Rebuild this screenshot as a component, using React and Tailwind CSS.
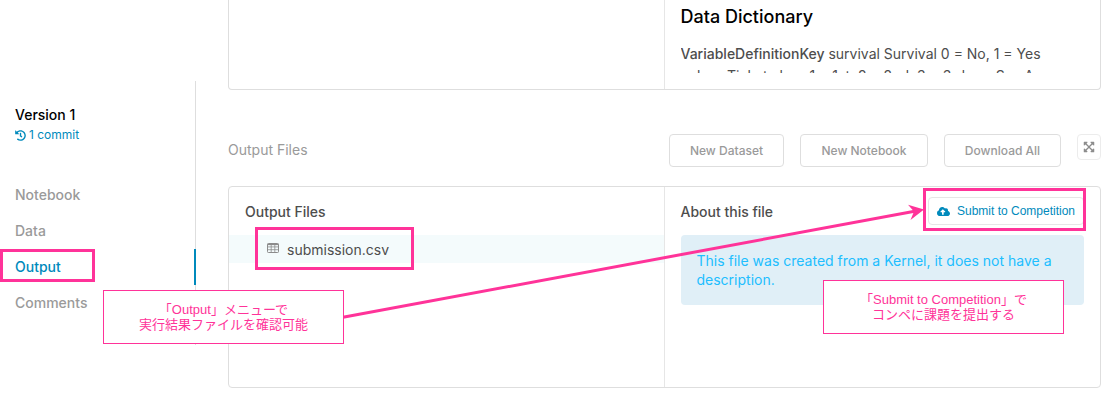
import { FaCloudUploadAlt, FaExpandArrowsAlt, FaHistory } from "react-icons/fa";

const navItems = ["Notebook", "Data", "Output", "Comments"];
const actions = [
  { label: "New Dataset", width: "w-[115px]" },
  { label: "New Notebook", width: "w-32" },
  { label: "Download All", width: "w-[117px]" },
];

function TableIcon() {
  return (
    <svg width="12" height="10" viewBox="0 0 12 10" fill="none" stroke="#8c8c8c" className="-mt-1" aria-hidden="true">
      <rect x="0.5" y="0.5" width="11" height="9" rx="0.8" />
      <path d="M0.5 1.5h11" strokeWidth="1.2" />
      <path d="M0.5 3.9h11M0.5 6.7h11M4.2 0.5v9M7.8 0.5v9" strokeWidth="0.8" />
    </svg>
  );
}

function Highlight({ className }) {
  return <span className={`pointer-events-none absolute border-3 border-[#ff3399] ${className}`} />;
}

function Sidebar() {
  return (
    <aside className="mt-[81px] h-[264px] w-[196px] shrink-0 border-r border-[#dedede] pt-6">
      <div className="pl-[15px]">
        <h2 className="text-sm leading-5 font-medium text-black">Version 1</h2>
        <a href="#commits" className="flex items-center gap-[3px] text-xs leading-5 text-[#008abc]">
          <FaHistory size={11} />
          1 commit
        </a>
      </div>
      <nav className="mt-8 flex flex-col">
        {navItems.map((item) => {
          const active = item === "Output";
          return (
            <a
              key={item}
              href={`#${item.toLowerCase()}`}
              aria-current={active ? "page" : undefined}
              className={`relative -mr-px flex h-9 items-center pl-[15px] text-sm font-medium ${
                active ? "border-r-2 border-[#008abc] text-[#008abc]" : "text-[#9a9a9a]"
              }`}
            >
              {item}
              {active && <Highlight className="top-0 left-0 h-[33px] w-[95px]" />}
            </a>
          );
        })}
      </nav>
    </aside>
  );
}

function Callout({ className, children }) {
  return (
    <div
      className={`absolute flex h-[54px] w-[241px] items-center justify-center border border-[#ff3399] bg-white text-center font-['Liberation_Sans','Noto_Sans_CJK_JP',sans-serif] text-[13px] leading-[15px] text-[#ff3399] ${className}`}
    >
      <p>{children}</p>
    </div>
  );
}

export default function App() {
  return (
    <div className="relative flex items-start overflow-hidden bg-white pb-[31px] font-['Inter',sans-serif]">
      <Sidebar />
      <main className="ml-8 mr-[13px] min-w-0 flex-1">
        <section className="grid h-[90px] grid-cols-2 rounded-b border border-t-0 border-[#dedede]">
          <div className="border-r border-[#e6e6e6]" />
          <div className="px-4 pt-[5px]">
            <h2 className="text-lg leading-6 font-medium text-black">Data Dictionary</h2>
            <p className="mt-[14px] h-[30px] overflow-hidden text-sm leading-[22px] text-[#4d4d4d]">
              <strong className="font-medium">VariableDefinitionKey</strong> survival Survival 0 = No, 1 = Yes
              <br />
              pclass Ticket class 1 = 1st, 2 = 2nd, 3 = 3rd sex Sex Age
            </p>
          </div>
        </section>

        <div className="mt-11 flex items-start">
          <h2 className="mr-auto text-sm leading-8 text-[#9a9a9a]">Output Files</h2>
          <div className="flex items-start gap-4">
            {actions.map(({ label, width }) => (
              <button
                key={label}
                type="button"
                className={`h-[33px] rounded border border-[#dedede] text-xs font-medium text-[#9a9a9a] ${width}`}
              >
                {label}
              </button>
            ))}
            <button
              type="button"
              aria-label="Expand"
              className="flex h-[26px] w-6 items-center justify-center rounded border border-[#ececec] text-[#8c8c8c]"
            >
              <FaExpandArrowsAlt size={12} />
            </button>
          </div>
        </div>

        <section className="mt-[19px] grid min-h-[202px] grid-cols-2 rounded border border-[#dedede]">
          <div className="border-r border-[#e6e6e6] pt-[15px]">
            <h3 className="px-4 text-sm leading-5 font-medium text-[#4d4d4d]">Output Files</h3>
            <a
              href="#submission"
              className="relative mt-[13px] flex h-7 items-center gap-2 bg-[#f4fbfc] pt-px pl-[38px] text-sm text-[#4d4d4d]"
            >
              <TableIcon />
              submission.csv
              <Highlight className="-top-2 left-[26px] h-[43px] w-[159px]" />
            </a>
          </div>
          <div className="px-4 pt-[10px]">
            <div className="flex items-start justify-between">
              <h3 className="text-sm leading-[30px] font-medium text-[#4d4d4d]">About this file</h3>
              <button
                type="button"
                className="relative flex h-7 w-[156px] items-center justify-center gap-[7px] rounded border border-[#e6e6e6] font-['Liberation_Sans',sans-serif] text-xs text-[#008abc]"
              >
                <FaCloudUploadAlt size={13} className="shrink-0" />
                <span className="whitespace-nowrap">Submit to Competition</span>
                <Highlight className="-top-[10px] -right-[3px] h-[43px] w-[163px]" />
              </button>
            </div>
            <p className="mt-2 min-h-[70px] rounded bg-[#e0eff7] px-4 py-4 text-sm leading-[19px] text-[#20beff]">
              This file was created from a Kernel, it does not have a description.
            </p>
          </div>
        </section>
      </main>

      <svg
        className="pointer-events-none absolute top-[200px] left-[340px]"
        width="590"
        height="122"
        viewBox="340 200 590 122"
        aria-hidden="true"
      >
        <path d="M343 317.3L916 211" stroke="#ff3399" strokeWidth="3" />
        <path d="M924 209.5L908 204.7L914 211.5L910.5 220Z" fill="#ff3399" />
      </svg>
      <Callout className="top-[290px] left-[103px]">
        「Output」メニューで
        <br />
        実行結果ファイルを確認可能
      </Callout>
      <Callout className="top-[280px] left-[823px]">
        「Submit to Competition」で
        <br />
        コンペに課題を提出する
      </Callout>
    </div>
  );
}
